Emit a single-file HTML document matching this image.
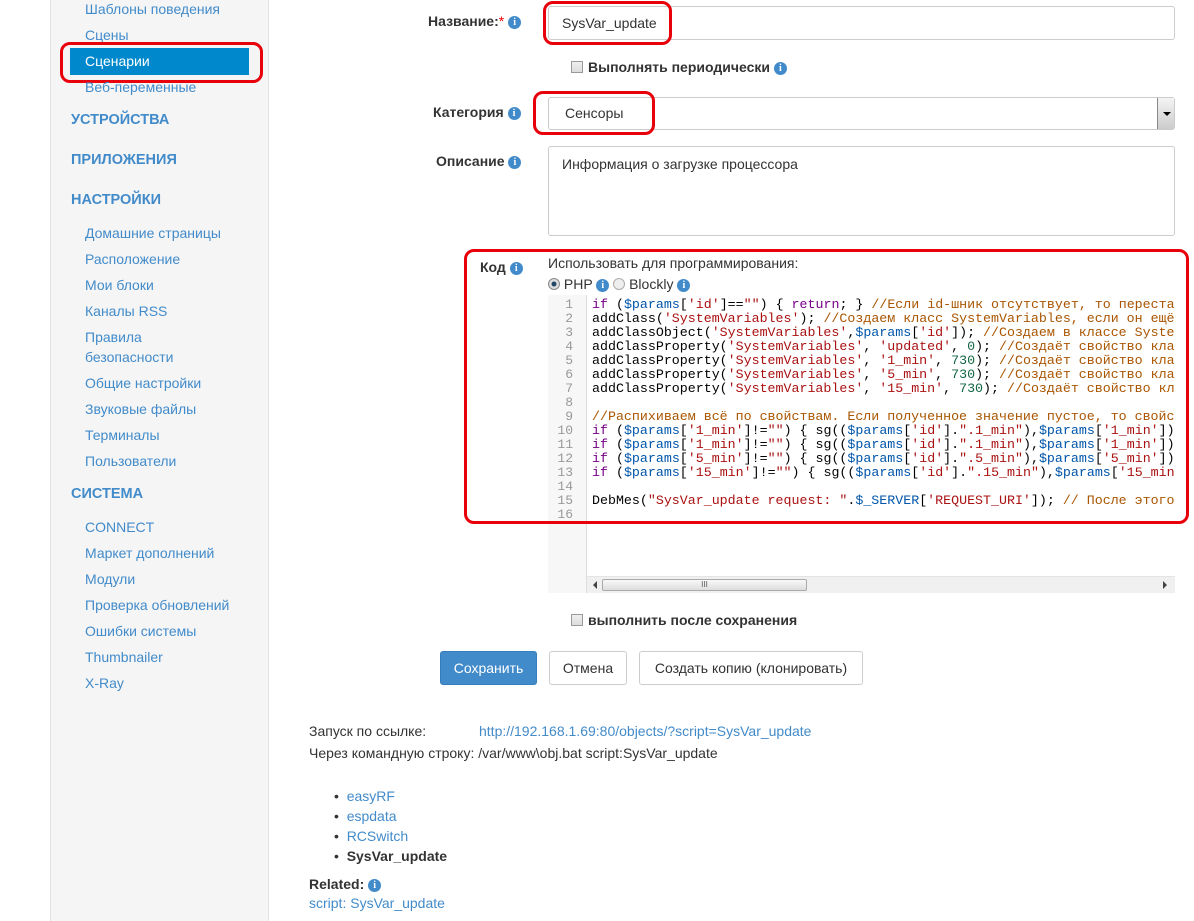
<!DOCTYPE html>
<html><head><meta charset="utf-8"><style>
*{margin:0;padding:0;box-sizing:border-box}
body{width:1194px;height:921px;overflow:hidden;background:#fff;font-family:"Liberation Sans",sans-serif;font-size:14px;color:#333;position:relative}
.a{position:absolute;white-space:nowrap}
.side{position:absolute;left:50px;top:0;width:219px;height:921px;background:#f5f5f5;border-left:1px solid #e3e3e3;border-right:1px solid #e3e3e3}
.sl{position:absolute;left:85px;color:#428bca;font-size:14px}
.sh{position:absolute;left:71px;color:#428bca;font-size:14.5px;font-weight:bold}
.lbl{position:absolute;font-weight:bold;color:#333;text-align:right}
.i{display:inline-block;width:13px;height:13px;border-radius:50%;background:#428bca;color:#fff;font-size:10px;font-weight:bold;text-align:center;line-height:13px;font-family:"Liberation Serif",serif;vertical-align:1px}
.inp{position:absolute;left:548px;width:627px;border:1px solid #ccc;border-radius:3px;background:#fff;padding-left:13px}
.red{position:absolute;border:3px solid #e8000b;border-radius:10px}
.code{position:absolute;left:548px;top:295px;width:627px;height:298px;background:#fff;overflow:hidden}
.gut{position:absolute;left:0;top:0;width:39px;height:298px;background:#f7f7f7;border-right:1px solid #ddd}
.ln{position:absolute;left:0;width:25px;text-align:right;color:#999;font-family:"Liberation Mono",monospace;font-size:13px;line-height:14px}
.cl{position:absolute;left:44px;font-family:"Liberation Mono",monospace;font-size:13.3px;line-height:14px;white-space:pre;color:#000}
.k{color:#708}.v{color:#05a}.s{color:#a11}.c{color:#a50}.n{color:#164}
.btn{position:absolute;top:651px;height:34px;border:1px solid #ccc;border-radius:3px;background:#fff;text-align:center;line-height:32px;font-size:14px;color:#333}
.cb{display:inline-block;width:12px;height:12px;border:1px solid #999;background:linear-gradient(#eee,#ddd);vertical-align:-1px;margin-right:5px}
a{color:#428bca;text-decoration:none}
</style></head><body>
<div class="side"></div>
<div class="sl" style="top:1px">Шаблоны поведения</div>
<div class="sl" style="top:27px">Сцены</div>
<div style="position:absolute;left:70px;top:48px;width:179px;height:27px;background:#0088cc"></div>
<div class="sl" style="top:53px;color:#fff">Сценарии</div>
<div class="red" style="left:60px;top:42px;width:203px;height:41px"></div>
<div class="sl" style="top:79px">Веб-переменные</div>
<div class="sh" style="top:112px">УСТРОЙСТВА</div>
<div class="sh" style="top:152px">ПРИЛОЖЕНИЯ</div>
<div class="sh" style="top:192px">НАСТРОЙКИ</div>
<div class="sl" style="top:225px">Домашние страницы</div>
<div class="sl" style="top:251px">Расположение</div>
<div class="sl" style="top:277px">Мои блоки</div>
<div class="sl" style="top:303px">Каналы RSS</div>
<div class="sl" style="top:329px">Правила</div>
<div class="sl" style="top:349px">безопасности</div>
<div class="sl" style="top:375px">Общие настройки</div>
<div class="sl" style="top:401px">Звуковые файлы</div>
<div class="sl" style="top:427px">Терминалы</div>
<div class="sl" style="top:453px">Пользователи</div>
<div class="sh" style="top:486px">СИСТЕМА</div>
<div class="sl" style="top:519px">CONNECT</div>
<div class="sl" style="top:545px">Маркет дополнений</div>
<div class="sl" style="top:571px">Модули</div>
<div class="sl" style="top:597px">Проверка обновлений</div>
<div class="sl" style="top:623px">Ошибки системы</div>
<div class="sl" style="top:649px">Thumbnailer</div>
<div class="sl" style="top:675px">X-Ray</div>

<div class="a lbl" style="left:428px;top:13px">Название:<span style="color:#e00;font-weight:normal">*</span> <span class="i">i</span></div>
<div class="inp" style="top:6px;height:34px;line-height:32px">SysVar_update</div>
<div class="red" style="left:543px;top:1px;width:129px;height:44px"></div>
<div class="a" style="left:571px;top:59px;font-weight:bold"><span class="cb"></span>Выполнять периодически <span class="i">i</span></div>

<div class="a lbl" style="left:433px;top:104px">Категория <span class="i">i</span></div>
<div class="inp" style="top:97px;height:33px;line-height:31px;padding-left:16px">Сенсоры</div>
<div style="position:absolute;left:1157px;top:98px;width:17px;height:31px;border-left:1px solid #888;background:linear-gradient(#f4f4f4,#ccc)"><div style="position:absolute;left:5px;top:14px;border-left:4px solid transparent;border-right:4px solid transparent;border-top:4px solid #000"></div></div>
<div class="red" style="left:533px;top:91px;width:122px;height:44px"></div>

<div class="a lbl" style="left:436px;top:153px">Описание <span class="i">i</span></div>
<div class="inp" style="top:146px;height:90px;padding-top:9px">Информация о загрузке процессора</div>

<div class="a lbl" style="left:480px;top:259px">Код <span class="i">i</span></div>
<div class="a" style="left:548px;top:255px">Использовать для программирования:</div>
<div class="a" style="left:548px;top:276px"><span style="display:inline-block;width:12px;height:12px;border-radius:50%;border:1px solid #888;background:radial-gradient(#246 30%,#ddd 40%);vertical-align:-1px"></span> PHP <span class="i">i</span> <span style="display:inline-block;width:12px;height:12px;border-radius:50%;border:1px solid #aaa;background:#eee;vertical-align:-1px"></span> Blockly <span class="i">i</span></div>

<div class="code">
<div class="gut"></div>
<div class="ln" style="top:3px">1<br>2<br>3<br>4<br>5<br>6<br>7<br>8<br>9<br>10<br>11<br>12<br>13<br>14<br>15<br>16</div>
<div class="cl" style="top:3px"><span class="k">if</span> (<span class="v">$params</span>[<span class="s">'id'</span>]==<span class="s">""</span>) { <span class="k">return</span>; } <span class="c">//Если id-шник отсутствует, то переста</span>
addClass(<span class="s">'SystemVariables'</span>); <span class="c">//Создаем класс SystemVariables, если он ещё</span>
addClassObject(<span class="s">'SystemVariables'</span>,<span class="v">$params</span>[<span class="s">'id'</span>]); <span class="c">//Создаем в классе Syste</span>
addClassProperty(<span class="s">'SystemVariables'</span>, <span class="s">'updated'</span>, <span class="n">0</span>); <span class="c">//Создаёт свойство кла</span>
addClassProperty(<span class="s">'SystemVariables'</span>, <span class="s">'1_min'</span>, <span class="n">730</span>); <span class="c">//Создаёт свойство кла</span>
addClassProperty(<span class="s">'SystemVariables'</span>, <span class="s">'5_min'</span>, <span class="n">730</span>); <span class="c">//Создаёт свойство кла</span>
addClassProperty(<span class="s">'SystemVariables'</span>, <span class="s">'15_min'</span>, <span class="n">730</span>); <span class="c">//Создаёт свойство кл</span>

<span class="c">//Распихиваем всё по свойствам. Если полученное значение пустое, то свойс</span>
<span class="k">if</span> (<span class="v">$params</span>[<span class="s">'1_min'</span>]!=<span class="s">""</span>) { sg((<span class="v">$params</span>[<span class="s">'id'</span>].<span class="s">".1_min"</span>),<span class="v">$params</span>[<span class="s">'1_min'</span>])
<span class="k">if</span> (<span class="v">$params</span>[<span class="s">'1_min'</span>]!=<span class="s">""</span>) { sg((<span class="v">$params</span>[<span class="s">'id'</span>].<span class="s">".1_min"</span>),<span class="v">$params</span>[<span class="s">'1_min'</span>])
<span class="k">if</span> (<span class="v">$params</span>[<span class="s">'5_min'</span>]!=<span class="s">""</span>) { sg((<span class="v">$params</span>[<span class="s">'id'</span>].<span class="s">".5_min"</span>),<span class="v">$params</span>[<span class="s">'5_min'</span>])
<span class="k">if</span> (<span class="v">$params</span>[<span class="s">'15_min'</span>]!=<span class="s">""</span>) { sg((<span class="v">$params</span>[<span class="s">'id'</span>].<span class="s">".15_min"</span>),<span class="v">$params</span>[<span class="s">'15_min</span>

DebMes(<span class="s">"SysVar_update request: "</span>.<span class="v">$_SERVER</span>[<span class="s">'REQUEST_URI'</span>]); <span class="c">// После этого</span>
</div>
<div style="position:absolute;left:39px;top:281px;width:588px;height:17px;background:#f0f0f0;border-top:1px solid #e4e4e4">
<div style="position:absolute;left:6px;top:4px;border-top:4px solid transparent;border-bottom:4px solid transparent;border-right:4px solid #444"></div>
<div style="position:absolute;left:15px;top:2px;width:205px;height:12px;border:1px solid #aaa;border-radius:2px;background:linear-gradient(#f8f8f8,#ddd);font-size:8px;text-align:center;line-height:10px;color:#555">III</div>
<div style="position:absolute;right:8px;top:4px;border-top:4px solid transparent;border-bottom:4px solid transparent;border-left:4px solid #444"></div>
</div>
</div>
<div class="red" style="left:464px;top:249px;width:725px;height:275px"></div>

<div class="a" style="left:571px;top:612px;font-weight:bold"><span class="cb"></span>выполнить после сохранения</div>

<div class="btn" style="left:440px;width:97px;background:#428bca;border-color:#357ebd;color:#fff">Сохранить</div>
<div class="btn" style="left:549px;width:78px">Отмена</div>
<div class="btn" style="left:639px;width:224px">Создать копию (клонировать)</div>

<div class="a" style="left:309px;top:723px">Запуск по ссылке:</div>
<div class="a" style="left:479px;top:723px"><a>http://192.168.1.69:80/objects/?script=SysVar_update</a></div>
<div class="a" style="left:309px;top:745px">Через командную строку: /var/www\obj.bat script:SysVar_update</div>
<div class="a" style="left:334px;top:786px;line-height:20px">•&nbsp;&nbsp;<a>easyRF</a><br>•&nbsp;&nbsp;<a>espdata</a><br>•&nbsp;&nbsp;<a>RCSwitch</a><br>•&nbsp;&nbsp;<b>SysVar_update</b></div>
<div class="a" style="left:309px;top:876px;font-weight:bold">Related: <span class="i">i</span></div>
<div class="a" style="left:309px;top:895px"><a>script: SysVar_update</a></div>
</body></html>
